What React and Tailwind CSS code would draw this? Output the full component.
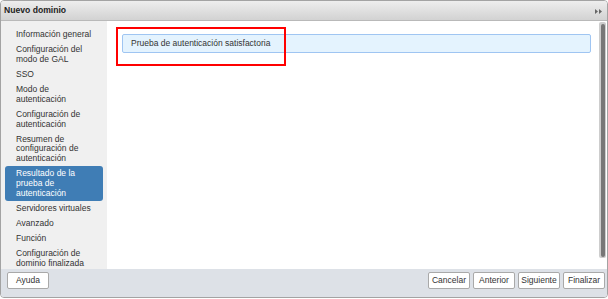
import React from 'react';

const NAV = [
    { id: 'general', lines: ['Información general'] },
    { id: 'gal', lines: ['Configuración del', 'modo de GAL'] },
    { id: 'sso', lines: ['SSO'] },
    { id: 'authmode', lines: ['Modo de', 'autenticación'] },
    { id: 'authcfg', lines: ['Configuración de', 'autenticación'] },
    { id: 'summary', lines: ['Resumen de', 'configuración de', 'autenticación'] },
    { id: 'result', lines: ['Resultado de la', 'prueba de', 'autenticación'] },
    { id: 'servers', lines: ['Servidores virtuales'] },
    { id: 'advanced', lines: ['Avanzado'] },
    { id: 'role', lines: ['Función'] },
    { id: 'done', lines: ['Configuración de', 'dominio finalizada'] }
];

function FooterButton({ children }) {
    return (
        <button className="h-[17px] w-[42px] bg-white border border-[#a9a9a9] rounded-[2px] text-[8.5px] leading-none text-[#333] flex items-center justify-center">
            {children}
        </button>
    );
}

export default function App() {
    const active = 'result';

    return (
        <div
            className="w-[608px] h-[299px] bg-white"
            style={{ fontFamily: '"Liberation Sans", Arial, sans-serif' }}
        >
            <div className="w-full h-[298px] border border-[#a3a3a3] rounded-[4px] overflow-hidden flex flex-col">
                {/* Title bar */}
                <div className="h-[20px] shrink-0 flex items-center justify-between pl-[3px] pr-[5px] bg-gradient-to-b from-[#eeeeee] to-[#d2d2d2] border-b border-[#b9b9b9]">
                    <span className="text-[8.6px] font-bold text-[#222]">Nuevo dominio</span>
                    <svg width="7" height="5" viewBox="0 0 7 5" className="mt-[1px]">
                        <polygon points="0,0 3,2.5 0,5" fill="#666" />
                        <polygon points="4,0 7,2.5 4,5" fill="#666" />
                    </svg>
                </div>

                {/* Body */}
                <div className="flex flex-1 min-h-0">
                    {/* Steps */}
                    <div className="w-[106px] shrink-0 bg-[#f0f0f0] pt-[6.5px] flex flex-col">
                        {NAV.map(item => (
                            <div
                                key={item.id}
                                className={`mx-[4px] pl-[11px] pr-[2px] py-[2.7px] rounded-[3px] text-[8.5px] leading-[9.7px] ${
                                    item.id === active ? 'bg-[#3f7db5] text-white' : 'text-[#333]'
                                }`}
                            >
                                {item.lines.map(l => (
                                    <div key={l}>{l}</div>
                                ))}
                            </div>
                        ))}
                    </div>

                    {/* Content */}
                    <div className="relative flex-1 bg-white pl-[15px] pt-[13px] pr-[8px]">
                        <div className="h-[19px] flex items-center pl-[8px] bg-[#e4f3fe] border border-[#9fc5f2] rounded-[2px] text-[8.5px] text-[#333]">
                            Prueba de autenticación satisfactoria
                        </div>
                        {/* highlight marker */}
                        <div className="absolute left-[9px] top-[6px] w-[170px] h-[39px] border-2 border-[#ff0000]" />
                    </div>

                    {/* Scrollbar */}
                    <div className="w-[8px] shrink-0 bg-white pt-[1px] pb-[11px] pr-[1px]">
                        <div className="h-full w-[7px] bg-[#cdcdcd] rounded-[2px] p-[1.5px]">
                            <div className="h-full w-full bg-[#777777] rounded-[2px]" />
                        </div>
                    </div>
                </div>

                {/* Footer */}
                <div className="h-[28px] shrink-0 bg-[#dde1e7] flex items-start justify-between pt-[3px] pl-[6px] pr-[2px]">
                    <FooterButton>Ayuda</FooterButton>
                    <div className="flex gap-[3px]">
                        <FooterButton>Cancelar</FooterButton>
                        <FooterButton>Anterior</FooterButton>
                        <FooterButton>Siguiente</FooterButton>
                        <FooterButton>Finalizar</FooterButton>
                    </div>
                </div>
            </div>
        </div>
    );
}
